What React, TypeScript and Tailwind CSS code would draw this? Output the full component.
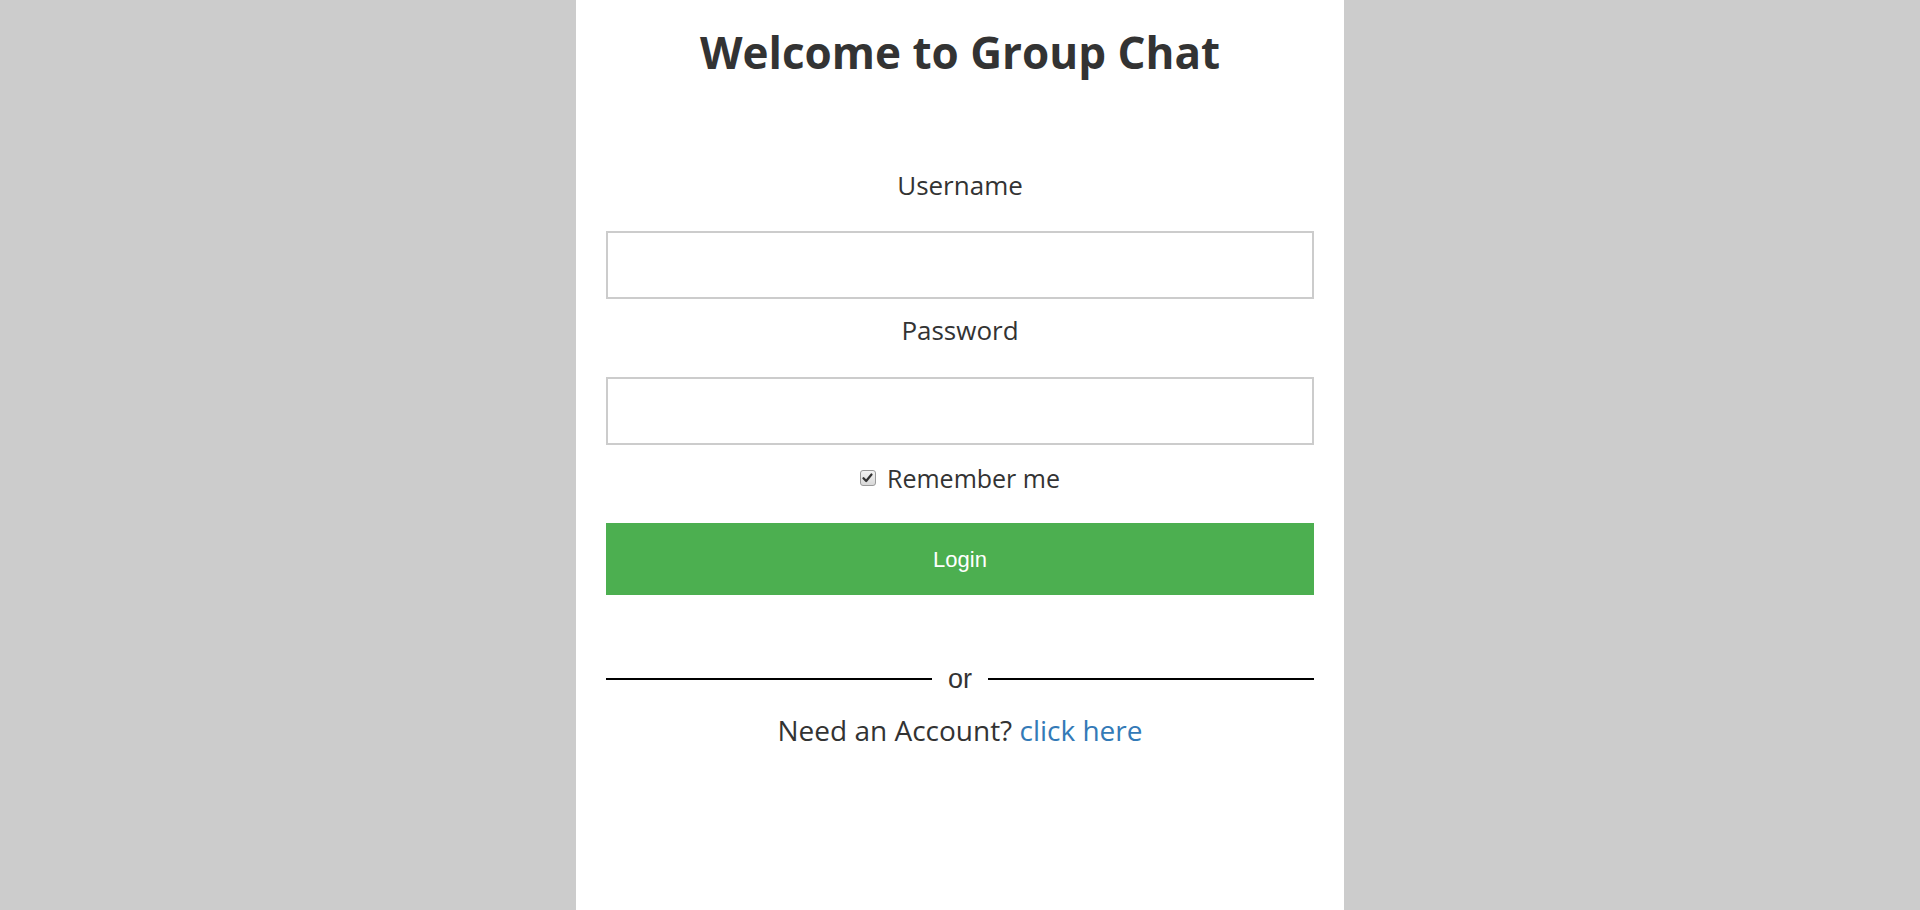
import { useState } from 'react';

const comic = "font-['Comic_Sans_MS','Open_Sans',sans-serif]";

export default function App() {
  const [remember, setRemember] = useState(true);
  const [username, setUsername] = useState('');
  const [password, setPassword] = useState('');

  return (
    <div className="min-h-[910px] w-full bg-[#cccccc] flex justify-center">
      <div className={`w-[768px] min-h-[910px] bg-white px-[30px] pt-[26px] text-[#333333] ${comic}`}>
        <h1 className="text-center text-[44px] font-bold leading-[52px]">Welcome to Group Chat</h1>

        <form className="mt-[91px] flex flex-col" onSubmit={(e) => e.preventDefault()}>
          <label htmlFor="username" className="text-center text-[26px] leading-[32px]">
            Username
          </label>
          <input
            id="username"
            type="text"
            value={username}
            onChange={(e) => setUsername(e.target.value)}
            className="mt-[30px] h-[68px] w-full border-2 border-[#cccccc] px-3 text-[20px] outline-none"
          />

          <label htmlFor="password" className="mt-[15px] text-center text-[26px] leading-[32px]">
            Password
          </label>
          <input
            id="password"
            type="password"
            value={password}
            onChange={(e) => setPassword(e.target.value)}
            className="mt-[31px] h-[68px] w-full border-2 border-[#cccccc] px-3 text-[20px] outline-none"
          />

          <label className="mt-[18px] flex h-[30px] cursor-pointer items-center justify-center gap-[11px] text-[25px] leading-[30px]">
            <span
              onClick={() => setRemember(!remember)}
              className="flex h-[16px] w-[16px] items-center justify-center rounded-[3px] border border-[#9a9a9a] bg-gradient-to-b from-[#f4f4f4] to-[#d8d8d8]"
            >
              {remember && (
                <svg width="11" height="10" viewBox="0 0 11 10">
                  <path d="M1.5 5.2 L4.2 8 L9.5 1.5" fill="none" stroke="#333" strokeWidth="2.2" strokeLinecap="round" strokeLinejoin="round" />
                </svg>
              )}
            </span>
            <span>Remember me</span>
          </label>

          <button
            type="submit"
            className="mt-[30px] h-[72px] w-full bg-[#4caf50] text-[22px] text-white font-['Liberation_Sans',Arial,sans-serif]"
          >
            Login
          </button>

          <div className="mt-[69px] flex h-[30px] items-center">
            <div className="h-[2px] flex-1 bg-black" />
            <span className="mx-4 text-[27px] leading-[30px] font-['Liberation_Sans',Arial,sans-serif] text-[#333333]">or</span>
            <div className="h-[2px] flex-1 bg-black" />
          </div>

          <p className="mt-[20px] text-center text-[28px] leading-[32px]">
            Need an Account? <a href="#" className="text-[#337ab7]">click here</a>
          </p>
        </form>
      </div>
    </div>
  );
}
